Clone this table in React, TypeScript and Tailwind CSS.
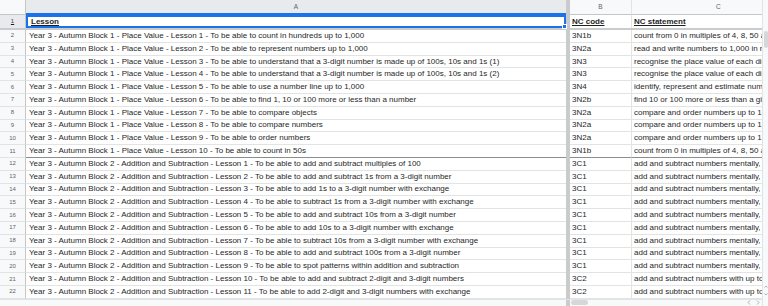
import React from "react";

const B1 = "Year 3 - Autumn Block 1 - Place Value - ";
const B2 = "Year 3 - Autumn Block 2 - Addition and Subtraction - ";

const S = {
  n1b: "count from 0 in multiples of 4, 8, 50 and 100; find 10 or 100 more or less than a given number",
  n2aRead: "read and write numbers to 1,000 in numerals and in words",
  n3: "recognise the place value of each digit in a 3-digit number (100s, 10s, 1s)",
  n4: "identify, represent and estimate numbers using different representations",
  n2b: "find 10 or 100 more or less than a given number",
  n2aCompare: "compare and order numbers up to 1,000",
  c1: "add and subtract numbers mentally, including: a 3-digit number and 1s; a 3-digit number and 10s; a 3-digit number and 100s",
  c2: "add and subtract numbers with up to 3 digits, using formal written methods of columnar addition and subtraction",
};

const rows: [string, string, string][] = [
  [B1 + "Lesson 1 - To be able to count in hundreds up to 1,000", "3N1b", S.n1b],
  [B1 + "Lesson 2 - To be able to represent numbers up to 1,000", "3N2a", S.n2aRead],
  [B1 + "Lesson 3 - To be able to understand that a 3-digit number is made up of 100s, 10s and 1s (1)", "3N3", S.n3],
  [B1 + "Lesson 4 - To be able to understand that a 3-digit number is made up of 100s, 10s and 1s (2)", "3N3", S.n3],
  [B1 + "Lesson 5 - To be able to use a number line up to 1,000", "3N4", S.n4],
  [B1 + "Lesson 6 - To be able to find 1, 10 or 100 more or less than a number", "3N2b", S.n2b],
  [B1 + "Lesson 7 - To be able to compare objects", "3N2a", S.n2aCompare],
  [B1 + "Lesson 8 - To be able to compare numbers", "3N2a", S.n2aCompare],
  [B1 + "Lesson 9 - To be able to order numbers", "3N2a", S.n2aCompare],
  [B1 + "Lesson 10 - To be able to count in 50s", "3N1b", S.n1b],
  [B2 + "Lesson 1 - To be able to add and subtract multiples of 100", "3C1", S.c1],
  [B2 + "Lesson 2 - To be able to add and subtract 1s from a 3-digit number", "3C1", S.c1],
  [B2 + "Lesson 3 - To be able to add 1s to a 3-digit number with exchange", "3C1", S.c1],
  [B2 + "Lesson 4 - To be able to subtract 1s from a 3-digit number with exchange", "3C1", S.c1],
  [B2 + "Lesson 5 - To be able to add and subtract 10s from a 3-digit number", "3C1", S.c1],
  [B2 + "Lesson 6 - To be able to add 10s to a 3-digit number with exchange", "3C1", S.c1],
  [B2 + "Lesson 7 - To be able to subtract 10s from a 3-digit number with exchange", "3C1", S.c1],
  [B2 + "Lesson 8 - To be able to add and subtract 100s from a 3-digit number", "3C1", S.c1],
  [B2 + "Lesson 9 - To be able to spot patterns within addition and subtraction", "3C1", S.c1],
  [B2 + "Lesson 10 - To be able to add and subtract 2-digit and 3-digit numbers", "3C2", S.c2],
  [B2 + "Lesson 11 - To be able to add 2-digit and 3-digit numbers with exchange", "3C2", S.c2],
];

function DataRow({ n, cells, dark }: { n: number; cells: [string, string, string]; dark: boolean }) {
  const line = dark ? "border-b-[#8d8d8d]" : "border-b-[#e2e3e3]";
  return (
    <div className="flex h-[12.8px]">
      <div className="w-[26px] shrink-0 flex items-center justify-center bg-[#f8f9fa] border-r border-r-[#c4c7c5] border-b border-b-[#e2e3e3] text-[6px] text-[#5f6368]">
        {n}
      </div>
      <div className={`w-[540px] shrink-0 flex items-center pl-[3px] overflow-hidden whitespace-nowrap border-b ${line}`}>
        {cells[0]}
      </div>
      <div className="w-[4px] shrink-0 bg-[#c9cbcd]" />
      <div className={`w-[62px] shrink-0 flex items-center pl-[2px] overflow-hidden whitespace-nowrap border-r border-r-[#e2e3e3] border-b ${line}`}>
        {cells[1]}
      </div>
      <div className={`flex-1 min-w-0 flex items-center pl-[2px] overflow-hidden whitespace-nowrap border-b ${line}`}>
        {cells[2]}
      </div>
    </div>
  );
}

export default function App() {
  return (
    <div
      className="w-[768px] h-[306px] overflow-hidden bg-white flex text-[8px] text-[#1f1f1f]"
      style={{ fontFamily: '"Liberation Sans", Arial, sans-serif' }}
    >
      <div className="flex-1 min-w-0 flex flex-col">
        {/* column letters */}
        <div className="flex h-[15px] text-[6.5px] text-[#5f6368]">
          <div className="w-[26px] shrink-0 bg-[#f8f9fa] border-r border-r-[#c4c7c5] border-b border-b-[#c4c7c5]" />
          <div className="w-[540px] shrink-0 bg-[#e8eaed] flex items-center justify-center border-b-2 border-b-[#1a73e8]">A</div>
          <div className="w-[4px] shrink-0 bg-[#c9cbcd]" />
          <div className="w-[62px] shrink-0 bg-[#f8f9fa] flex items-center justify-center border-r border-r-[#e2e3e3] border-b border-b-[#c4c7c5]">B</div>
          <div className="flex-1 bg-[#f8f9fa] flex items-center pl-[84px] border-b border-b-[#c4c7c5]">C</div>
        </div>

        {/* frozen header row */}
        <div className="flex h-[13px] font-bold underline">
          <div className="w-[26px] shrink-0 flex items-center justify-center bg-[#e8eaed] border-r border-r-[#c4c7c5] text-[6px] text-[#3c4043] font-normal no-underline">
            1
          </div>
          <div className="relative w-[540px] shrink-0 flex items-center pl-[3px] border-2 border-[#1a73e8]">
            Lesson
            <span className="absolute -right-[3px] -bottom-[3px] w-[5px] h-[5px] bg-[#1a73e8] border border-white" />
          </div>
          <div className="w-[4px] shrink-0 bg-[#c9cbcd]" />
          <div className="w-[62px] shrink-0 flex items-center pl-[2px] border-r border-r-[#e2e3e3]">NC code</div>
          <div className="flex-1 flex items-center pl-[2px]">NC statement</div>
        </div>
        <div className="h-[2px] bg-[#c9cbcd]" />

        {rows.map((r, i) => (
          <DataRow key={i} n={i + 2} cells={r} dark={i === 9} />
        ))}

        {/* horizontal scrollbar */}
        <div className="flex flex-1 bg-[#f8f9fa] border-t border-t-[#e2e3e3]">
          <div className="w-[566px] shrink-0" />
          <div className="w-[4px] shrink-0 bg-[#c9cbcd]" />
          <div className="flex-1 flex items-center pl-[1px]">
            <div className="w-[17px] h-[5px] rounded-full bg-[#d5d7d9]" />
            <div className="ml-auto mr-[2px] flex items-center gap-[5px] text-[#9aa0a6]">
              <svg width="4" height="5" viewBox="0 0 4 5"><path d="M3 0.5 L1 2.5 L3 4.5" fill="none" stroke="currentColor" strokeWidth="0.8" /></svg>
              <svg width="4" height="5" viewBox="0 0 4 5"><path d="M1 0.5 L3 2.5 L1 4.5" fill="none" stroke="currentColor" strokeWidth="0.8" /></svg>
            </div>
          </div>
        </div>
      </div>

      {/* vertical scrollbar */}
      <div className="w-[6px] shrink-0 flex flex-col bg-[#f8f9fa] border-l border-l-[#e2e3e3]">
        <div className="h-[31px] shrink-0" />
        <div className="h-[17px] mx-auto w-[4px] rounded-full bg-[#d5d7d9]" />
        <div className="mt-auto mb-[10px] flex flex-col items-center gap-[5px] text-[#9aa0a6]">
          <svg width="4" height="3" viewBox="0 0 4 3"><path d="M0.5 2.5 L2 1 L3.5 2.5" fill="none" stroke="currentColor" strokeWidth="0.8" /></svg>
          <svg width="4" height="3" viewBox="0 0 4 3"><path d="M0.5 0.5 L2 2 L3.5 0.5" fill="none" stroke="currentColor" strokeWidth="0.8" /></svg>
        </div>
      </div>
    </div>
  );
}
